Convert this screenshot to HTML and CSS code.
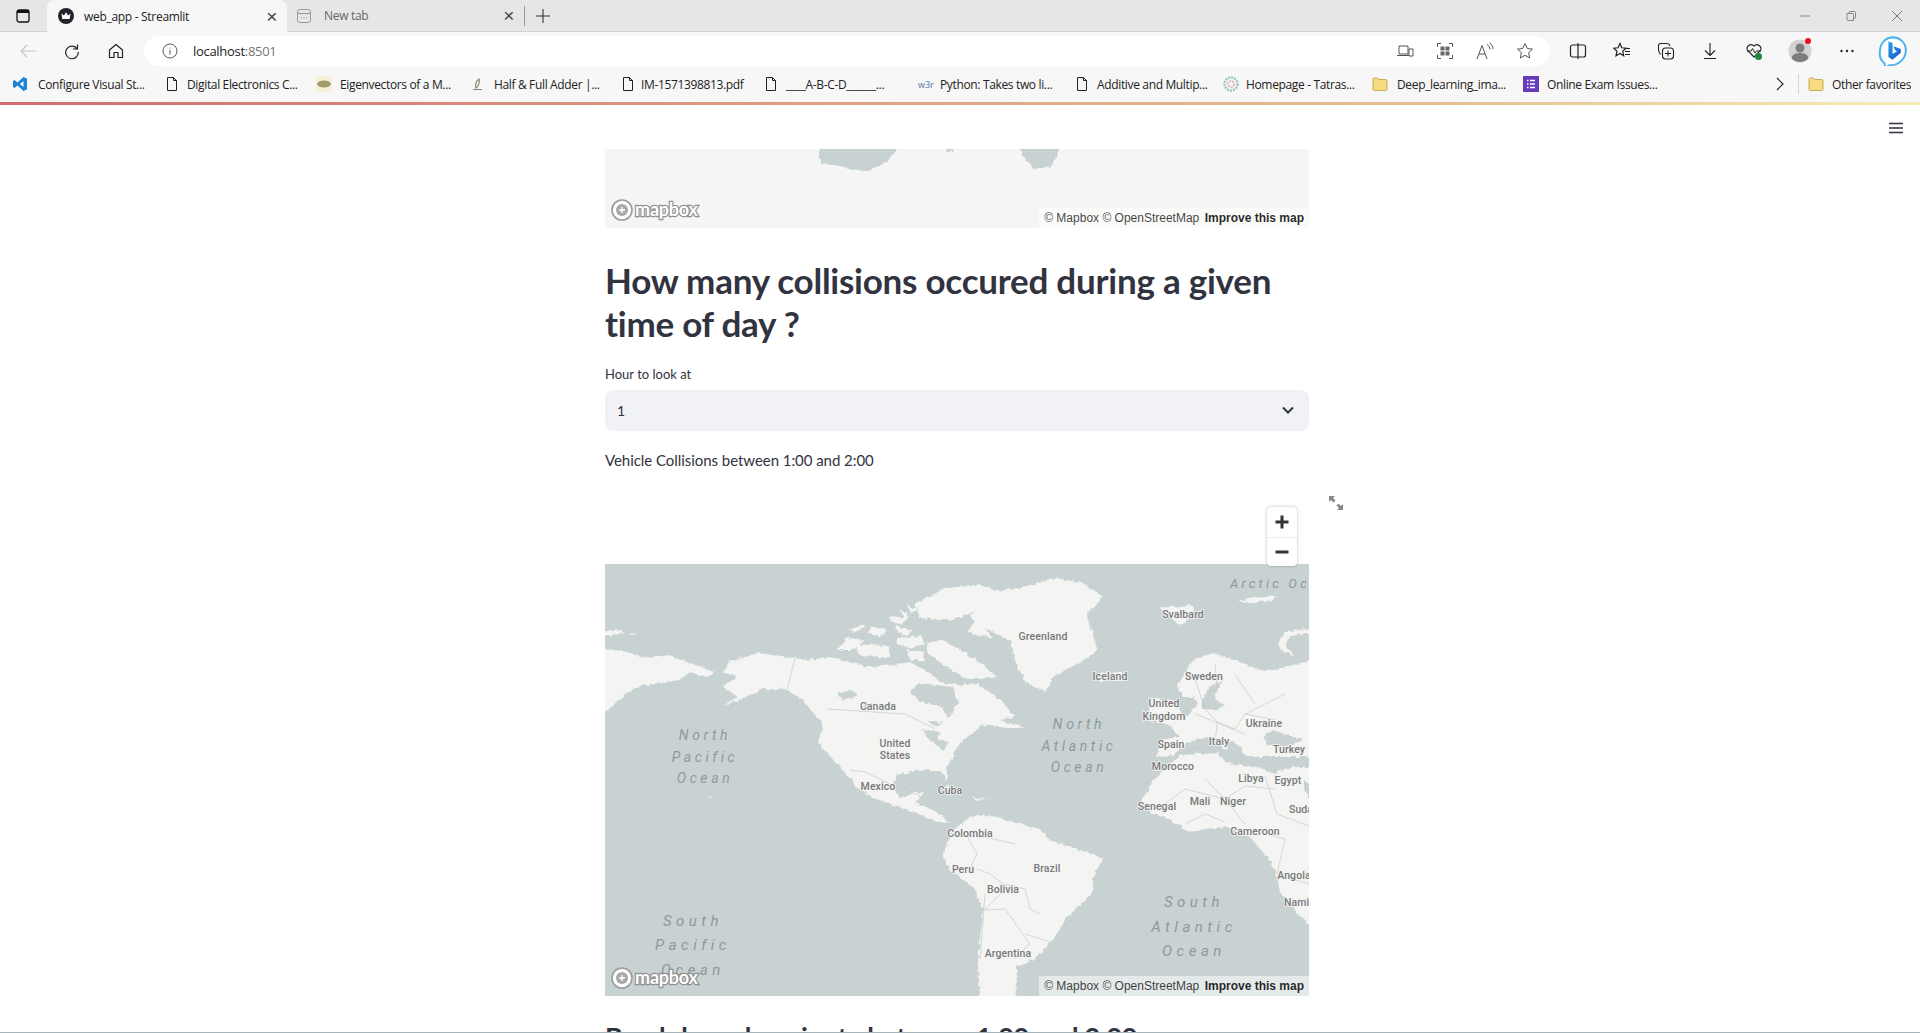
FILE: index.html
```html
<!DOCTYPE html>
<html lang="en">
<head>
<meta charset="utf-8">
<title>web_app - Streamlit</title>
<link rel="stylesheet" href="styles.css">
</head>
<body>
<svg class="defs" width="0" height="0" aria-hidden="true">
  <symbol id="file" viewBox="0 0 16 16"><path d="M3.500 1.500h6l3 3v10h-9z M9.500 1.500v3h3" fill="none" stroke="#222" stroke-width="1"/></symbol>
  <symbol id="folder" viewBox="0 0 16 16"><path d="M1 3.500a1.500 1.500 0 0 1 1.500-1.500h3l1.500 1.500h6.500a1.500 1.500 0 0 1 1.500 1.500v8a1.500 1.500 0 0 1-1.500 1.500h-11a1.500 1.500 0 0 1-1.500-1.500z" fill="#f7dc82" stroke="#b99a3e" stroke-width=".8"/></symbol>
  <linearGradient id="bingfill" x1="0" y1="0" x2="1" y2="1"><stop offset="0" stop-color="#2aa0e8"/><stop offset="1" stop-color="#1557c9"/></linearGradient>
  <filter id="coast" filterUnits="userSpaceOnUse" x="-20" y="-20" width="760" height="480">
    <feTurbulence type="fractalNoise" baseFrequency=".22" numOctaves="2" seed="4"/>
    <feDisplacementMap in="SourceGraphic" scale="5" xChannelSelector="R" yChannelSelector="G"/>
  </filter>
</svg>
<div class="browser">
  <header class="tabstrip">
    <div class="tab-toggle">
      <svg width="14" height="14" viewBox="0 0 14 14"><rect x="1" y="1" width="12" height="12" rx="2" fill="none" stroke="#111" stroke-width="1.300"/><rect x="1" y="1" width="12" height="3" fill="#111"/></svg>
    </div>
    <div class="tab tab-active">
      <svg class="favicon" width="16" height="16" viewBox="0 0 16 16"><circle cx="8" cy="8" r="8" fill="#23232b"/><path d="M3.500 5.500l2.400 1.900L8 4.200l2.100 3.200 2.400-1.900-.8 5.500H4.300z" fill="#fff"/></svg>
      <span class="tab-title">web_app - Streamlit</span>
      <span class="tab-close">×</span>
    </div>
    <div class="tab tab-idle">
      <svg class="favicon" width="16" height="16" viewBox="0 0 16 16"><rect x="1.500" y="1.500" width="13" height="13" rx="2.500" fill="none" stroke="#999"/><path d="M1.500 5.500h13M5 10h1M7.500 10h1M10 10h1" stroke="#999" fill="none"/></svg>
      <span class="tab-title tab-title-idle">New tab</span>
      <span class="tab-close">×</span>
    </div>
    <span class="tab-divider"></span>
    <svg class="tab-plus" width="16" height="16" viewBox="0 0 16 16"><path d="M8 1v14M1 8h14" stroke="#333" stroke-width="1.100"/></svg>
    <div class="window-controls">
      <svg width="12" height="12" viewBox="0 0 12 12"><path d="M1 6h10" stroke="#888"/></svg>
      <svg width="12" height="12" viewBox="0 0 12 12"><path d="M2 3.500h5.500a1 1 0 0 1 1 1V10.500H3a1 1 0 0 1-1-1z M4 3.500V2.500a1 1 0 0 1 1-1h4.500a1 1 0 0 1 1 1v5a1 1 0 0 1-1 1h-1" fill="none" stroke="#888"/></svg>
      <svg width="12" height="12" viewBox="0 0 12 12"><path d="M1 1l10 10M11 1L1 11" stroke="#777"/></svg>
    </div>
  </header>

  <nav class="toolbar">
    <svg class="nav-icon nav-back" width="18" height="18" viewBox="0 0 18 18"><path d="M17 9H2M8 3L2 9l6 6" fill="none" stroke="#c6c6c6" stroke-width="1.200"/></svg>
    <svg class="nav-icon" width="18" height="18" viewBox="0 0 18 18"><path d="M14.500 2.500v4.500h-4.500M14.300 7A6.300 6.300 0 1 0 15.300 10" fill="none" stroke="#222" stroke-width="1.200"/></svg>
    <svg class="nav-icon" width="18" height="18" viewBox="0 0 18 18"><path d="M2.500 8L9 2.500 15.500 8v7.500h-4.500v-5H7v5H2.500z" fill="none" stroke="#222" stroke-width="1.200" stroke-linejoin="round"/></svg>
    <div class="address">
      <svg class="info" width="16" height="16" viewBox="0 0 16 16"><circle cx="8" cy="8" r="7" fill="none" stroke="#555"/><path d="M8 7v4.500M8 4.500v1" stroke="#555"/></svg>
      <span class="url">localhost<span class="url-port">:8501</span></span>
      <div class="address-icons">
        <svg width="18" height="18" viewBox="0 0 18 18"><path d="M3 4h9v8H3zM1 13.500h12M13 7h4v7h-4z" fill="none" stroke="#555"/></svg>
        <svg width="18" height="18" viewBox="0 0 18 18"><path d="M1.500 5V1.500H5M13 1.500h3.500V5M16.500 13v3.500H13M5 16.500H1.500V13" fill="none" stroke="#555"/><path d="M4.500 4.500h4v4h-4zM9.500 4.500h4v4h-4zM4.500 9.500h4v4h-4zM9.500 9.500h4v4h-4z" fill="#666"/></svg>
        <svg width="18" height="18" viewBox="0 0 18 18"><path d="M1 17L6 3.500 11 17M3 12h6M11 2.500c2 1 3 3 3 5M13.500 1c2.500 1.500 3.500 3.500 3.500 6" fill="none" stroke="#555"/></svg>
        <svg width="18" height="18" viewBox="0 0 18 18"><path d="M9 1.500l2.300 5 5.200.6-3.900 3.600 1.100 5.300L9 13.300 4.300 16l1.100-5.300L1.500 7.100l5.200-.6z" fill="none" stroke="#555"/></svg>
      </div>
    </div>
    <div class="tool-icons">
      <svg width="18" height="18" viewBox="0 0 18 18"><rect x="1.500" y="3" width="15" height="12" rx="2" fill="none" stroke="#222" stroke-width="1.200"/><path d="M9 1v16" stroke="#222" stroke-width="1.200"/></svg>
      <svg width="18" height="18" viewBox="0 0 18 18"><path d="M7 1.500l1.700 4.300 4.300.4-3.300 3 1 4.500L7 11.400 3 13.700l1-4.500-3.300-3 4.300-.4z" fill="none" stroke="#222" stroke-width="1.200"/><path d="M12 6.500h5M12 9.500h5M12 12.500h5" stroke="#222"/></svg>
      <svg width="18" height="18" viewBox="0 0 18 18"><path d="M3.500 12.500C2 11 1.500 9 1.500 7V3.500a2 2 0 0 1 2-2H10c1.500 0 2.500 1 3 2.500" fill="none" stroke="#222" stroke-width="1.100"/><rect x="5.500" y="6" width="11" height="11" rx="3" fill="none" stroke="#222" stroke-width="1.100"/><path d="M11 8.500v6M8 11.500h6" stroke="#222"/></svg>
      <svg width="18" height="18" viewBox="0 0 18 18"><path d="M9 1v12M4 8.500l5 5 5-5M3 16.500h12" fill="none" stroke="#222" stroke-width="1.100"/></svg>
      <svg width="18" height="18" viewBox="0 0 18 18"><path d="M9 15L2.500 8.500A4 4 0 0 1 9 4a4 4 0 0 1 6.500 4.500L9 15z" fill="none" stroke="#222" stroke-width="1.100"/><path d="M2 9h4l1.500-2.500L10 11l1.500-2H16" fill="none" stroke="#222"/><circle cx="13.500" cy="14.500" r="3.500" fill="#1f8a3b"/></svg>
      <svg class="avatar" width="24" height="26" viewBox="0 0 24 26"><circle cx="12" cy="14" r="11.500" fill="#d2d2d2"/><circle cx="12" cy="11" r="4.500" fill="#7d7d7d"/><path d="M3.500 21c1-4 4.500-5 8.500-5s7.500 1 8.500 5a11 11 0 0 1-17 0z" fill="#7d7d7d"/><circle cx="20" cy="4" r="3" fill="#e81123"/></svg>
      <svg width="18" height="18" viewBox="0 0 18 18"><circle cx="3.500" cy="9" r="1.200" fill="#222"/><circle cx="9" cy="9" r="1.200" fill="#222"/><circle cx="14.500" cy="9" r="1.200" fill="#222"/></svg>
      <svg class="bing" width="30" height="33" viewBox="0 0 32 36"><path d="M16 1.500a14 14 0 0 1 14 14c0 9-7 16.500-18 16.500l-5 3v-5A14.500 14.500 0 0 1 2 15.500a14 14 0 0 1 14-14z" fill="#fff" stroke="#4fb2ee" stroke-width="2.200"/><path d="M11 6l4.500 1.500v12l5-3-2.500-1.200-1.500-4 8 3v4L15.500 26 11 23z" fill="url(#bingfill)"/></svg>
    </div>
  </nav>

  <nav class="bookmarks">
    <a class="bm bm-1"><svg width="16" height="16" viewBox="0 0 16 16"><path d="M11.500 1L15 2.700v10.600L11.500 15 5.500 9.500 2.500 12 1 11V5l1.500-1 3 2.500zM11.500 5L7.800 8l3.700 3z" fill="#1a85d6"/></svg><span>Configure Visual St...</span></a>
    <a class="bm bm-2"><svg width="16" height="16"><use href="#file"/></svg><span>Digital Electronics C...</span></a>
    <a class="bm bm-3"><svg width="16" height="16" viewBox="0 0 16 16"><rect width="16" height="16" fill="#f6f1dd"/><ellipse cx="8" cy="8" rx="7" ry="3.500" fill="#a39c68"/></svg><span>Eigenvectors of a M...</span></a>
    <a class="bm bm-4"><svg width="16" height="16" viewBox="0 0 16 16"><path d="M9 3c-3 2-4 6-3 9 2-1 4-5 3-9zM3 13.500h9" fill="none" stroke="#7c8a72" stroke-width="1.200"/></svg><span>Half &amp; Full Adder |...</span></a>
    <a class="bm bm-5"><svg width="16" height="16"><use href="#file"/></svg><span>IM-1571398813.pdf</span></a>
    <a class="bm bm-6"><svg width="16" height="16"><use href="#file"/></svg><span>____A-B-C-D______...</span></a>
    <a class="bm bm-7"><span class="w3">w3r</span><span>Python: Takes two li...</span></a>
    <a class="bm bm-8"><svg width="16" height="16"><use href="#file"/></svg><span>Additive and Multip...</span></a>
    <a class="bm bm-9"><svg width="16" height="16" viewBox="0 0 16 16"><circle cx="8" cy="8" r="6.500" fill="none" stroke="#9fc8b8" stroke-width="2.500" stroke-dasharray="2 1"/><circle cx="8" cy="8" r="3" fill="none" stroke="#d9b7c9" stroke-width="2" stroke-dasharray="2 1"/></svg><span>Homepage - Tatras...</span></a>
    <a class="bm bm-10"><svg width="16" height="16"><use href="#folder"/></svg><span>Deep_learning_ima...</span></a>
    <a class="bm bm-11"><svg width="16" height="16" viewBox="0 0 16 16"><rect width="16" height="16" fill="#673ab7"/><path d="M4 4.500h1.500M7 4.500h5M4 8h1.500M7 8h5M4 11.500h1.500M7 11.500h5" stroke="#fff" stroke-width="1.500"/></svg><span>Online Exam Issues...</span></a>
    <svg class="bm-more" width="10" height="14" viewBox="0 0 10 14"><path d="M2 1l6 6-6 6" fill="none" stroke="#222" stroke-width="1.200"/></svg>
    <span class="bm-sep"></span>
    <a class="bm bm-other"><svg width="16" height="16"><use href="#folder"/></svg><span>Other favorites</span></a>
  </nav>
  <div class="decoration"></div>

  <div class="page">
    <div class="app-header">
      <svg width="16" height="12" viewBox="0 0 16 12"><path d="M1 1.500h14M1 6h14M1 10.500h14" stroke="#31333f" stroke-width="1.600"/></svg>
    </div>
    <main class="content">
      <div class="map map-top">
        <svg class="map-canvas" width="704" height="79" viewBox="0 0 704 79">
          <rect width="704" height="79" fill="#f5f5f3"/>
          <path filter="url(#coast)" d="M214 -8H300L280 14 261 23 248 20 234 17 216 14 214 6zM408 -8H459L445 19 438 18 429 20 422 12zM339 -8H351L349 2 342 2z" fill="#c9d2d3"/>
        </svg>
        <div class="mapbox-logo"><svg width="100" height="26" viewBox="0 0 100 26"><circle cx="12" cy="13" r="10" fill="#fff" stroke="#9a9a9a" stroke-width="1.600"/><circle cx="12" cy="13" r="6" fill="#a8a8a8"/><path d="M12 10v6M9 13h6" stroke="#fff" stroke-width="1.400"/><text class="logo-word" x="25" y="19">mapbox</text></svg></div>
        <div class="attrib"><span>© Mapbox</span> <span>© OpenStreetMap</span> <b>Improve this map</b></div>
      </div>

      <h2 class="title">How many collisions occured during a given time of day ?</h2>
      <label class="field-label">Hour to look at</label>
      <div class="select"><span>1</span>
        <svg width="14" height="9" viewBox="0 0 14 9"><path d="M2 1.500l5 5 5-5" fill="none" stroke="#31333f" stroke-width="2"/></svg>
      </div>
      <p class="caption">Vehicle Collisions between 1:00 and 2:00</p>

      <section class="chart">
        <svg class="expand" width="16" height="16" viewBox="0 0 16 16"><path d="M1 1h6L5 3l2.500 2.500-2 2L3 5 1 7zM15 15H9l2-2-2.500-2.500 2-2L13 11l2-2z" fill="#85878e"/></svg>
        <div class="zoom-ctl">
          <div class="zoom-btn"><svg width="14" height="14" viewBox="0 0 14 14"><path d="M7 .5v13M.5 7h13" stroke="#333" stroke-width="3"/></svg></div>
          <div class="zoom-btn"><svg width="14" height="14" viewBox="0 0 14 14"><path d="M.5 7h13" stroke="#333" stroke-width="3"/></svg></div>
        </div>
        <div class="map map-main">
          <svg class="map-canvas" width="704" height="432" viewBox="0 0 704 432">
            <rect width="704" height="432" fill="#c9d2d3"/>
            <g filter="url(#coast)">
            <g fill="#f4f4f2">
              <path d="M-12 83L22 88 42 94 60 92 68 93 95 103 110 107 102 113 85 108 75 116 38 121 20 130-12 160z"/>
              <path d="M-8 69L8 66 15 67 20 69 10 71-8 72zM24 69L32 70 28 71z"/>
              <path d="M117 108L125 98 153 89 190 94 202 96 225 93 248 98 262 103 288 101 305 98 325 109 335 118 352 121 372 119 385 129 395 135 410 153 395 156 420 164 402 164 378 161 355 179 342 203 342 216 335 206 315 206 292 211 288 223 295 234 310 229 320 228 310 239 328 246 345 259 332 258 295 243 268 234 252 223 235 203 213 179 218 161 198 136 182 126 158 124 142 133 118 142 133 133 117 123 132 113z"/>
              <path d="M232 86L242 74 260 76 247 86zM248 80L285 82 285 94 255 92z"/>
              <path d="M243 66L262 60 258 64 250 68zM265 62L282 66 276 72 264 70z"/>
              <path d="M290 62L308 66 302 72 292 68zM292 74L315 72 320 80 305 84 292 80zM300 86L318 88 320 96 306 96z"/>
              <path d="M310 40L340 24 375 21 395 28 365 50 345 56 315 54z"/>
              <path d="M322 79L338 76 372 96 392 113 362 116 342 103 322 89z"/>
              <path d="M285 52L300 54 296 60 286 58zM302 40L312 46 306 50zM295 46L305 52 300 56z"/>
              <path d="M372 55L400 42 378 62 388 74 362 68z"/>
              <path d="M365 53L382 29 418 23 448 14 478 19 498 33 482 50 492 86 482 94 448 113 442 128 422 120 412 103 405 76 372 61z"/>
              <path d="M366 232L378 236 385 234 372 237zM342 222L350 226 340 224z"/>
              <path d="M103 232L108 232 105 234z"/>
              <path d="M338 293L345 269 365 253 385 251 435 266 445 276 498 294 488 313 488 329 462 353 448 376 432 393 412 403 410 440H375L373 396 378 346 368 323 345 306z"/>
              <path d="M555 44L588 41 590 50 575 62 565 52z"/>
              <path d="M493 109L517 108 518 116 495 117z"/>
              <path d="M632 37L650 34 672 32 668 36 645 39z"/>
              <path d="M716 63L680 68 673 80 678 88 690 92 680 82 685 72 716 68z"/>
              <path d="M716 94L668 106 655 106 635 98 608 89 588 96 572 123 578 133 590 133 592 140 585 149 565 161 575 173 555 176 552 193 568 191 582 179 602 173 622 186 625 176 635 183 642 193 668 193 698 193 716 193z"/>
              <path d="M542 156L545 134 568 136 578 153 565 161z"/>
              <path d="M575 191L612 189 622 199 652 203 668 209 688 203 716 203V372L692 349 675 329 672 313 665 296 645 273 622 263 585 268 562 254 545 249 535 239 542 228 548 216z"/>
            </g>
            <g fill="#c9d2d3">
              <path d="M305 128L315 119 348 123 353 139 343 153 337 143 315 138z"/>
              <path d="M318 165L335 168 332 175 344 178 338 186 322 174zM232 130L246 126 252 132 238 136zM252 146L268 138 264 146zM322 157L338 158 330 162z"/>
              <path d="M603 124L618 116 612 128 610 135 620 142 612 146 598 145 598 135z"/>
              <path d="M658 173L668 166 698 176 682 183 662 181z"/>
              <path d="M698 214L716 240 716 252 700 228z"/>
            </g>
            </g>
            <g class="borders" fill="none" stroke="#bdc3c4" stroke-width=".6">
              <path d="M190 94L182 126M222 145L300 150 330 165M245 206L260 208 285 220M296 222L320 235"/>
              <path d="M345 269L362 272 385 274 410 280M362 272L372 290 365 305M372 305L385 310 398 320 420 325 425 345 435 350M380 345L398 328M378 346L400 345 425 380 408 395M420 370L445 378M380 330L375 395"/>
              <path d="M590 115L600 145 612 158 630 165 640 150 670 156M570 190L610 180 612 160M640 150L680 130M610 100L612 122M630 110L650 140M590 150L640 170"/>
              <path d="M560 240L580 225 620 235 640 222 670 225M600 215L620 235 640 260M660 212L672 250 704 262M640 265L680 275 672 310 704 320M580 260L600 250 620 258M672 340L704 335"/>
            </g>
            <g class="lbl">
              <text x="273" y="146">Canada</text>
              <text x="290" y="183">United</text>
              <text x="290" y="195">States</text>
              <text x="273" y="226">Mexico</text>
              <text x="345" y="230">Cuba</text>
              <text x="365" y="273">Colombia</text>
              <text x="358" y="309">Peru</text>
              <text x="398" y="329">Bolivia</text>
              <text x="442" y="308">Brazil</text>
              <text x="403" y="393">Argentina</text>
              <text x="438" y="76">Greenland</text>
              <text x="505" y="116">Iceland</text>
              <text x="578" y="54">Svalbard</text>
              <text x="599" y="116">Sweden</text>
              <text x="559" y="143">United</text>
              <text x="559" y="156">Kingdom</text>
              <text x="659" y="163">Ukraine</text>
              <text x="566" y="184">Spain</text>
              <text x="614" y="181">Italy</text>
              <text x="684" y="189">Turkey</text>
              <text x="568" y="206">Morocco</text>
              <text x="646" y="218">Libya</text>
              <text x="683" y="220">Egypt</text>
              <text x="595" y="241">Mali</text>
              <text x="628" y="241">Niger</text>
              <text x="552" y="246">Senegal</text>
              <text x="699" y="249">Sudan</text>
              <text x="650" y="271">Cameroon</text>
              <text x="689" y="315">Angola</text>
              <text x="699" y="342">Namibia</text>
            </g>
            <g class="sea">
              <text x="100" y="176">North</text>
              <text x="100" y="198">Pacific</text>
              <text x="100" y="219">Ocean</text>
              <text x="474" y="165">North</text>
              <text x="474" y="187">Atlantic</text>
              <text x="474" y="208">Ocean</text>
              <text class="sea-big" x="88" y="362">South</text>
              <text class="sea-big" x="88" y="386">Pacific</text>
              <text class="sea-big" x="88" y="411">Ocean</text>
              <text class="sea-big" x="589" y="343">South</text>
              <text class="sea-big" x="589" y="368">Atlantic</text>
              <text class="sea-big" x="589" y="392">Ocean</text>
              <text class="sea-arctic" x="625" y="24">Arctic Ocean</text>
            </g>
          </svg>
          <div class="mapbox-logo"><svg width="100" height="26" viewBox="0 0 100 26"><circle cx="12" cy="13" r="10" fill="#fff" stroke="#9a9a9a" stroke-width="1.600"/><circle cx="12" cy="13" r="6" fill="#a8a8a8"/><path d="M12 10v6M9 13h6" stroke="#fff" stroke-width="1.400"/><text class="logo-word" x="25" y="19">mapbox</text></svg></div>
          <div class="attrib"><span>© Mapbox</span> <span>© OpenStreetMap</span> <b>Improve this map</b></div>
        </div>
      </section>

      <h3 class="subtitle">Breakdown by minute between 1:00 and 2:00</h3>
    </main>
  </div>
</div>
</body>
</html>
```
FILE: styles.css
```css
* { box-sizing: border-box; }
html, body { margin: 0; height: 100%; overflow: hidden; background: #fff; }
.defs { position: absolute; }
.browser { height: 1033px; display: flex; flex-direction: column; overflow: hidden; border-bottom: 1px solid #a8b4ba; font-family: "Open Sans", "Liberation Sans", sans-serif; }

.tabstrip { height: 32px; flex: none; display: flex; align-items: stretch; background: #e6e6e6; border-bottom: 1px solid #d2d2d2; padding-left: 16px; }
.tab-toggle { width: 31px; display: flex; align-items: center; }
.tab { width: 240px; display: flex; align-items: center; position: relative; font-size: 12px; color: #222; letter-spacing: -0.3px; }
.tab-active { background: #f7f7f7; border-radius: 8px 8px 0 0; height: 32px; padding-left: 11px; }
.tab-idle { padding-left: 9px; width: 237px; }
.tab-title { margin-left: 10px; flex: 1; white-space: nowrap; }
.tab-title-idle { margin-left: 12px; color: #666; }
.tab-close { font-size: 19px; line-height: 1; color: #444; margin-right: 10px; font-family: "Liberation Sans", sans-serif; font-weight: 400; }
.tab-divider { width: 1px; height: 20px; background: #999; align-self: center; }
.tab-plus { align-self: center; margin-left: 10px; }
.window-controls { margin-left: auto; display: flex; align-items: center; gap: 34px; padding-right: 17px; }

.toolbar { height: 34px; flex: none; display: flex; align-items: flex-end; background: #f7f7f7; padding-left: 19px; }
.nav-icon { margin: 0 26px 6px 0; }
.nav-back { margin-right: 26px; }
.toolbar > .nav-icon:nth-child(3) { margin-right: 19px; }
.address { width: 1406px; height: 30px; background: #fff; border-radius: 15px; display: flex; align-items: center; padding-left: 18px; }
.info { margin-right: 15px; }
.url { font-size: 13px; color: #222; letter-spacing: -0.3px; }
.url-port { color: #777; }
.address-icons { margin-left: auto; display: flex; align-items: center; gap: 22px; padding-right: 16px; }
.tool-icons { flex: 1; display: flex; align-items: center; height: 30px; margin-left: 19px; gap: 26px; }
.avatar { margin-top: -2px; margin-left: -1px; }
.bing { margin-left: -4px; margin-top: 2px; }

.bookmarks { height: 36px; flex: none; display: flex; align-items: center; background: #f7f7f7; padding-left: 12px; font-size: 12px; color: #222; white-space: nowrap; position: relative; }
.bm { flex: none; display: flex; align-items: center; gap: 7px; letter-spacing: -0.35px; overflow: hidden; }
.bm-1 { width: 152px; gap: 10px; }
.bm-2 { width: 152px; }
.bm-3 { width: 154px; gap: 8px; }
.bm-4 { width: 150px; gap: 8px; }
.bm-5 { width: 143px; gap: 5px; }
.bm-6 { width: 155px; }
.bm-7 { width: 156px; gap: 6px; }
.bm-8 { width: 149px; }
.bm-9 { width: 149px; }
.bm-10 { width: 151px; gap: 9px; }
.bm-11 { width: 150px; gap: 8px; }
.w3 { font-size: 9px; color: #5a6fa8; width: 16px; letter-spacing: 0; }
.bm-more { flex: none; margin-left: 102px; }
.bm-sep { width: 1px; height: 20px; background: #d5d5d5; margin: 0 9px 0 13px; }
.bm-other { gap: 8px; }
.decoration { height: 3px; flex: none; background: linear-gradient(90deg, #d06c6c, #e0a287 45%, #e6c08f 75%, #f5eeb2); }

.page { flex: 1; min-height: 0; overflow: hidden; background: #fff; display: flex; flex-direction: column; }
.app-header { height: 44px; flex: none; display: flex; justify-content: flex-end; align-items: center; padding: 2px 16px 0 0; }
.content { width: 704px; margin-left: 605px; flex: none; color: #31333f; font-family: Lato, "Liberation Sans", sans-serif; }

.map { position: relative; overflow: hidden; }
.map-top { height: 79px; }
.map-canvas { display: block; }
.mapbox-logo { position: absolute; left: 5px; bottom: 5px; height: 26px; line-height: 0; }
.logo-word { font-family: Lato, sans-serif; font-weight: 700; font-size: 18px; fill: #fff; stroke: #8f8f8f; stroke-width: 2.400px; paint-order: stroke; letter-spacing: -0.2px; }
.attrib { position: absolute; right: 0; bottom: 0; height: 20px; padding: 0 5px 0 5px; background: rgba(255, 255, 255, .5); font: 12px/20px "Liberation Sans", Arial, sans-serif; color: rgba(0, 0, 0, .75); white-space: nowrap; }
.attrib b { font-weight: 700; color: rgba(0, 0, 0, .85); margin-left: 2px; }

.title { margin: 31px 0 0; font-size: 35px; line-height: 43px; font-weight: 700; letter-spacing: -0.25px; }
.field-label { display: block; margin-top: 19px; font-size: 13px; line-height: 20px; }
.select { margin-top: 6px; height: 41px; background: #f0f2f6; border-radius: 8px; display: flex; align-items: center; justify-content: space-between; padding: 0 14px 0 12px; font-size: 14px; }
.caption { margin: 17px 0 0; font-size: 15px; line-height: 24px; letter-spacing: -0.05px; }

.chart { position: relative; margin-top: 35px; padding-top: 57px; height: 489px; }
.expand { position: absolute; right: -35px; top: -12px; }
.zoom-ctl { position: absolute; right: 12px; top: 0; width: 30px; height: 59px; background: #fff; border-radius: 4px; box-shadow: 0 0 3px rgba(0, 0, 0, .3); z-index: 2; }
.zoom-btn { height: 29.500px; display: flex; align-items: center; justify-content: center; }
.zoom-btn + .zoom-btn { border-top: 1px solid #eee; }
.map-main { height: 432px; }

.lbl text { font-family: Roboto, sans-serif; font-size: 10.500px; font-weight: 500; fill: #77797a; text-anchor: middle; stroke: #f4f4f2; stroke-width: 1.500px; paint-order: stroke; letter-spacing: .1px; }
.sea text { font-family: Roboto, sans-serif; font-style: italic; font-size: 14px; fill: #8e999b; text-anchor: middle; letter-spacing: 3.600px; }
.sea .sea-big { font-size: 15px; letter-spacing: 4.500px; }
.sea .sea-arctic { text-anchor: start; font-size: 13px; letter-spacing: 3.200px; }

.subtitle { margin: 24px 0 0; font-size: 27px; line-height: 34px; font-weight: 700; white-space: nowrap; letter-spacing: -0.34px; }
```
